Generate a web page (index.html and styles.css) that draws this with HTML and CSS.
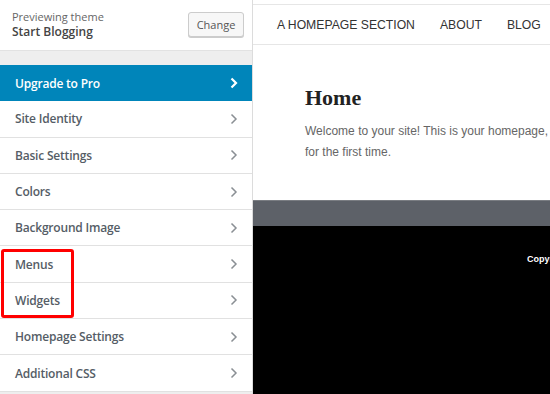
FILE: index.html
```html
<!DOCTYPE html>
<html>
<head>
<meta charset="utf-8">
<link rel="stylesheet" href="styles.css">
</head>
<body>
<div class="app">
  <aside class="sidebar">
    <div class="header">
      <div class="theme">
        <div class="theme-label">Previewing theme</div>
        <div class="theme-name">Start Blogging</div>
      </div>
      <button class="change">Change</button>
    </div>
    <div class="gap-band"></div>
    <ul class="menu">
      <li class="item pro">Upgrade to Pro<svg class="chev" viewBox="0 0 8 12"><polyline points="1.5,1.5 6,6 1.5,10.5"/></svg></li>
      <li class="item">Site Identity<svg class="chev" viewBox="0 0 8 12"><polyline points="1.5,1.5 6,6 1.5,10.5"/></svg></li>
      <li class="item">Basic Settings<svg class="chev" viewBox="0 0 8 12"><polyline points="1.5,1.5 6,6 1.5,10.5"/></svg></li>
      <li class="item">Colors<svg class="chev" viewBox="0 0 8 12"><polyline points="1.5,1.5 6,6 1.5,10.5"/></svg></li>
      <li class="item">Background Image<svg class="chev" viewBox="0 0 8 12"><polyline points="1.5,1.5 6,6 1.5,10.5"/></svg></li>
      <li class="item">Menus<svg class="chev" viewBox="0 0 8 12"><polyline points="1.5,1.5 6,6 1.5,10.5"/></svg></li>
      <li class="item">Widgets<svg class="chev" viewBox="0 0 8 12"><polyline points="1.5,1.5 6,6 1.5,10.5"/></svg></li>
      <li class="item">Homepage Settings<svg class="chev" viewBox="0 0 8 12"><polyline points="1.5,1.5 6,6 1.5,10.5"/></svg></li>
      <li class="item">Additional CSS<svg class="chev" viewBox="0 0 8 12"><polyline points="1.5,1.5 6,6 1.5,10.5"/></svg></li>
    </ul>
    <div class="highlight"></div>
  </aside>
  <main class="preview">
    <div class="topstrip"></div>
    <nav class="nav">
      <a>A HOMEPAGE SECTION</a>
      <a>ABOUT</a>
      <a>BLOG</a>
    </nav>
    <section class="content">
      <h1>Home</h1>
      <p>Welcome to your site! This is your homepage, which is what most visitors will see when they come to your site for the first time.</p>
    </section>
    <div class="band"></div>
    <footer class="footer"><span>Copyright</span></footer>
  </main>
</div>
</body>
</html>
```

FILE: styles.css
```css
* { box-sizing: border-box; }
html, body { margin: 0; padding: 0; }
body { width: 550px; height: 394px; overflow: hidden; background: #fff; }
.app { display: flex; height: 394px; }
.sidebar {
  width: 253px; flex: none; position: relative;
  background: #eeeeee; border-right: 1px solid #dcdcdc;
  font-family: "Open Sans", sans-serif;
}
.header {
  height: 51px; background: #fff; display: flex; align-items: center;
  justify-content: space-between; padding: 0 8px 0 12px;
  border-bottom: 1px solid #e2e2e2;
}
.theme { margin-top: -2px; }
.theme-label { font-size: 11px; color: #666; line-height: 15px; }
.theme-name { font-size: 12px; font-weight: 600; color: #444; line-height: 16px; }
.change {
  font-family: "Open Sans", sans-serif; font-size: 11px; color: #555;
  background: #f7f7f7; border: 1px solid #ccc; border-radius: 3px;
  width: 56px; height: 25px; padding: 0; box-shadow: 0 1px 0 #ccc;
  margin-top: -1px;
}
.gap-band { height: 14px; }
.menu { list-style: none; margin: 0; padding: 0; }
.item {
  height: 36.3px; display: flex; align-items: center; justify-content: space-between;
  padding: 0 14px 0 15px; background: #fff; border-bottom: 1px solid #e1e1e1;
  font-size: 12px; font-weight: 600; color: #555d66; letter-spacing: -0.2px;
}
.item.pro { background: #0085ba; color: #fff; border-bottom: none; }
.chev { width: 8px; height: 12px; fill: none; stroke: #8a8f94; stroke-width: 1.5; }
.pro .chev { stroke: #fff; stroke-width: 2.2; }
.highlight {
  position: absolute; left: 1px; top: 249px; width: 73px; height: 69px;
  border: 3px solid #ff0000; border-radius: 3px;
}
.preview { flex: 1; display: flex; flex-direction: column; font-family: "Liberation Sans", Arial, sans-serif; overflow: hidden; }
.topstrip { height: 5px; border-bottom: 1px solid #e6e6e6; flex: none; }
.nav {
  height: 40px; flex: none; display: flex; align-items: center; gap: 25px;
  padding-left: 24px; border-bottom: 1px solid #e6e6e6; white-space: nowrap;
}
.nav a { font-size: 12.2px; color: #333; }
.content { height: 155px; flex: none; padding: 40px 0 0 52px; }
.content h1 {
  margin: 0; font-family: "Liberation Serif", serif; font-weight: bold;
  font-size: 22px; color: #222; line-height: 26px;
}
.content p {
  margin: 10px 0 0; font-size: 12px; color: #666; line-height: 21px; width: 592px;
}
.band { height: 26px; flex: none; background: #5d6168; border-top: 1px solid #7a7d82; }
.footer { flex: 1; background: #000; position: relative; }
.footer span {
  position: absolute; left: 274px; top: 28px; color: #fff; font-size: 9px; font-weight: bold; white-space: nowrap;
}
```
